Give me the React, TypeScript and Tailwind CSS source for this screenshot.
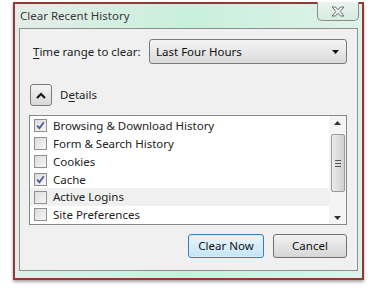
const items = [
  { label: "Browsing & Download History", checked: true },
  { label: "Form & Search History", checked: false },
  { label: "Cookies", checked: false },
  { label: "Cache", checked: true },
  { label: "Active Logins", checked: false, highlight: true },
  { label: "Site Preferences", checked: false },
];

const Checkbox = ({ checked }: { checked: boolean }) => (
  <div className="flex h-[13px] w-[13px] items-center justify-center border border-[#8e8f8f] bg-gradient-to-br from-[#dcdcdc] to-[#f7f7f7]">
    {checked && (
      <svg width="9" height="9" viewBox="0 0 9 9">
        <path d="M1.2 4.6 L3.4 7.2 L7.8 1.2" fill="none" stroke="#4a5d96" strokeWidth="1.8" />
      </svg>
    )}
  </div>
);

const Underlined = ({ text, index }: { text: string; index: number }) => (
  <span>
    {text.slice(0, index)}
    <span className="underline underline-offset-2">{text[index]}</span>
    {text.slice(index + 1)}
  </span>
);

export default function App() {
  return (
    <div
      className="h-[290px] w-[370px] overflow-hidden bg-white pl-[13px] pt-[2px] text-[11.5px] text-[#222]"
      style={{ fontFamily: '"Noto Sans", "Open Sans", sans-serif' }}
    >
      <div className="relative flex h-[278px] w-[351px] flex-col border-2 border-[#933737] bg-gradient-to-r from-[#e4ece8] via-[#c8f0dc] to-[#dff2ea] shadow-[0_2px_3px_rgba(0,0,0,0.35)]">
        {/* title bar */}
        <div className="flex h-[24px] items-center pl-[5px] text-[11.5px] text-[#3a3a3a]">
          Clear Recent History
        </div>
        <div className="absolute right-[3px] top-[-2px] flex h-[19px] w-[42px] items-center justify-center rounded-b-[5px] border border-t-0 border-[#8a8a8a] bg-gradient-to-b from-[#eaf3ef] to-[#d5ebe1]">
          <svg width="14" height="11" viewBox="0 0 14 11">
            <path
              d="M1 1 H4.5 L7 3.8 L9.5 1 H13 L9 5.5 L13 10 H9.5 L7 7.2 L4.5 10 H1 L5 5.5 Z"
              fill="#f4f4f4"
              stroke="#6a6a6a"
              strokeWidth="1"
            />
          </svg>
        </div>

        {/* content panel */}
        <div className="mx-[4px] flex h-[243px] flex-col border border-[#8e9090] bg-[#f0f0f0] pl-[9px] pr-[10px] pt-[10px]">
          <div className="flex items-center">
            <div className="ml-[4px]">
              <Underlined text="Time range to clear:" index={0} />
            </div>
            <div className="ml-auto flex h-[25px] w-[198px] items-center rounded-[3px] border border-[#7a7a7a] bg-gradient-to-b from-[#f4f4f4] to-[#dadada] pl-[6px] pr-[7px]">
              <span className="text-[#111]">Last Four Hours</span>
              <svg className="ml-auto" width="7" height="4" viewBox="0 0 7 4">
                <path d="M0 0 H7 L3.5 4 Z" fill="#111" />
              </svg>
            </div>
          </div>

          <div className="mt-[20px] flex items-center">
            <div className="ml-[1px] flex h-[22px] w-[22px] items-center justify-center rounded-[3px] border border-[#7a7a7a] bg-gradient-to-b from-[#f5f5f5] to-[#d8d8d8]">
              <svg width="10" height="7" viewBox="0 0 10 7">
                <path d="M1 6 L5 2 L9 6" fill="none" stroke="#111" strokeWidth="2" />
              </svg>
            </div>
            <div className="ml-[8px]">
              <Underlined text="Details" index={1} />
            </div>
          </div>

          <div className="mt-[9px] flex h-[110px] w-[318px] border border-[#828790] bg-white">
            <div className="flex flex-1 flex-col pt-[1px]">
              {items.map((it) => (
                <div
                  key={it.label}
                  className={`flex h-[17.8px] items-center pl-[4px] ${it.highlight ? "bg-[#f0f0f0]" : ""}`}
                >
                  <Checkbox checked={it.checked} />
                  <span className="ml-[6px] leading-none">{it.label}</span>
                </div>
              ))}
            </div>
            <div className="flex w-[17px] flex-col items-center bg-[#f4f4f4] pb-[4px] pt-[5px]">
              <svg width="7" height="4" viewBox="0 0 7 4">
                <path d="M0 4 L3.5 0 L7 4 Z" fill="#333" />
              </svg>
              <div className="mt-[9px] flex h-[58px] w-[14px] flex-col items-center justify-center gap-[2px] rounded-[2px] border border-[#9a9a9a] bg-gradient-to-r from-[#ececec] via-[#dedede] to-[#d0d0d0]">
                <div className="h-px w-[6px] bg-[#555]" />
                <div className="h-px w-[6px] bg-[#555]" />
                <div className="h-px w-[6px] bg-[#555]" />
              </div>
              <svg className="mt-auto" width="7" height="4" viewBox="0 0 7 4">
                <path d="M0 0 L7 0 L3.5 4 Z" fill="#333" />
              </svg>
            </div>
          </div>

          <div className="mt-[9px] flex justify-end gap-[9px]">
            <button className="flex h-[24px] w-[76px] items-center justify-center rounded-[3px] border border-[#3c7fb1] bg-gradient-to-b from-[#eaf6fd] to-[#c4e4f5] text-[#111] shadow-[inset_0_0_0_1px_#d6eefa]">
              Clear Now
            </button>
            <button className="flex h-[24px] w-[74px] items-center justify-center rounded-[3px] border border-[#707070] bg-gradient-to-b from-[#f2f2f2] to-[#d6d6d6] text-[#111]">
              Cancel
            </button>
          </div>
        </div>
      </div>
    </div>
  );
}
